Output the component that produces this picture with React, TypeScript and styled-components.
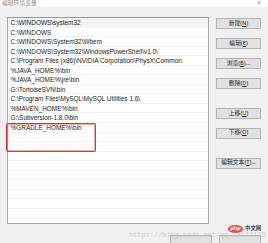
import React from "react";
import styled, { createGlobalStyle } from "styled-components";

const Global = createGlobalStyle`
  html, body { margin: 0; padding: 0; background: #f0f0f0; overflow: hidden; }
  #root { width: 268px; height: 243px; }
`;

const Window = styled.div`
  position: relative;
  width: 268px;
  height: 243px;
  background: #f0f0f0;
  font-family: "Noto Sans", "Noto Sans CJK SC", sans-serif;
  color: #1e1e1e;
  display: flex;
  flex-direction: column;
  overflow: hidden;
`;

const TitleBar = styled.div`
  height: 12px;
  background: #ffffff;
  display: flex;
  align-items: center;
  justify-content: space-between;
  padding: 0 6px 0 2px;
  box-sizing: border-box;
`;

const Title = styled.span`
  font-size: 5.8px;
  color: #8a8a8a;
  line-height: 1;
`;

const Close = styled.span`
  font-family: "DejaVu Sans", sans-serif;
  font-size: 7px;
  color: #b0b0b0;
  line-height: 1;
`;

const Body = styled.div`
  display: flex;
  gap: 7px;
  padding: 10px 0 0 7px;
`;

const List = styled.div`
  width: 202px;
  height: 207px;
  box-sizing: border-box;
  background: #ffffff;
  border: 1px solid #a8a8a8;
  border-top-color: #9a9a9a;
  display: flex;
  flex-direction: column;
  overflow: hidden;
`;

const Row = styled.div<{ $selected?: boolean }>`
  height: 9.55px;
  flex: none;
  box-sizing: border-box;
  border-bottom: 1px solid #f2f2f2;
  background: ${(p) => (p.$selected ? "#f3f3f3" : "transparent")};
  padding-left: 2.5px;
  font-family: "Liberation Sans", Arial, sans-serif;
  font-size: 6.45px;
  line-height: 9px;
  color: #1a1a1a;
  white-space: nowrap;
`;

const ButtonCol = styled.div`
  width: 45px;
  display: flex;
  flex-direction: column;
  gap: 8.4px;
  padding-top: 0.7px;
`;

const Spacer = styled.div<{ $h: number }>`
  height: ${(p) => p.$h}px;
  flex: none;
`;

const Btn = styled.div`
  height: 11.6px;
  box-sizing: border-box;
  background: #e1e1e1;
  border: 1px solid #b4b4b4;
  display: flex;
  align-items: center;
  justify-content: center;
  font-size: 5.8px;
  color: #222;
  white-space: nowrap;
  line-height: 1;
  & u { text-decoration-thickness: 0.5px; text-underline-offset: 1px; }
`;

const BottomBar = styled.div`
  display: flex;
  justify-content: flex-end;
  gap: 7px;
  padding: 11px 7px 0 0;
`;

const BottomBtn = styled.div`
  width: 42px;
  height: 12px;
  box-sizing: border-box;
  background: #e1e1e1;
  border: 1px solid #b4b4b4;
`;

const RedBox = styled.div`
  position: absolute;
  left: 6px;
  top: 123px;
  width: 90px;
  height: 29px;
  box-sizing: border-box;
  border: 1px solid #ec2b2b;
  box-shadow: inset 0 0 0 0.6px rgba(236, 43, 43, 0.7);
  border-radius: 1.5px;
`;

const Watermark = styled.div`
  position: absolute;
  left: 129px;
  top: 231px;
  font-family: "Liberation Mono", monospace;
  font-size: 6.9px;
  line-height: 8px;
  color: rgba(190, 190, 190, 0.85);
  white-space: nowrap;
`;

const PhpMark = styled.div`
  position: absolute;
  left: 228px;
  top: 225px;
  display: flex;
  align-items: center;
  gap: 2px;
`;

const PhpOval = styled.span`
  width: 15px;
  height: 7.5px;
  border-radius: 50%;
  background: #e5504f;
  color: #fff;
  font-family: "Liberation Sans", sans-serif;
  font-style: italic;
  font-weight: bold;
  font-size: 5.5px;
  display: flex;
  align-items: center;
  justify-content: center;
  line-height: 1;
`;

const PhpText = styled.span`
  font-size: 5.4px;
  color: #444;
  font-weight: bold;
  line-height: 1;
`;

const paths = [
  "C:\\WINDOWS\\system32",
  "C:\\WINDOWS",
  "C:\\WINDOWS\\System32\\Wbem",
  "C:\\WINDOWS\\System32\\WindowsPowerShell\\v1.0\\",
  "C:\\Program Files (x86)\\NVIDIA Corporation\\PhysX\\Common",
  "%JAVA_HOME%\\bin",
  "%JAVA_HOME%\\jre\\bin",
  "G:\\TortoiseSVN\\bin",
  "C:\\Program Files\\MySQL\\MySQL Utilities 1.6\\",
  "%MAVEN_HOME%\\bin",
  "G:\\Subversion-1.8.0\\bin",
  "%GRADLE_HOME%\\bin",
];

const rows = [...paths, ...Array(10).fill("")];

type B = { label: string; key: string; suffix?: string; before?: number };
const buttons: B[] = [
  { label: "新建", key: "N" },
  { label: "编辑", key: "E" },
  { label: "浏览", key: "B", suffix: "..." },
  { label: "删除", key: "D" },
  { label: "上移", key: "U", before: 10 },
  { label: "下移", key: "O" },
  { label: "编辑文本", key: "T", suffix: "...", before: 10 },
];

export default function App() {
  return (
    <>
      <Global />
      <Window>
        <TitleBar>
          <Title>编辑环境变量</Title>
          <Close>✕</Close>
        </TitleBar>
        <Body>
          <List>
            {rows.map((r, i) => (
              <Row key={i} $selected={i === 0}>
                {r}
              </Row>
            ))}
          </List>
          <ButtonCol>
            {buttons.map((b) => (
              <React.Fragment key={b.key}>
                {b.before ? <Spacer $h={b.before - 8.4} /> : null}
                <Btn>
                  {b.label}(<u>{b.key}</u>){b.suffix ?? ""}
                </Btn>
              </React.Fragment>
            ))}
          </ButtonCol>
        </Body>
        <BottomBar>
          <BottomBtn />
          <BottomBtn />
        </BottomBar>
        <RedBox />
        <Watermark>https://blog.csdn.net/qq_22172133</Watermark>
        <PhpMark>
          <PhpOval>php</PhpOval>
          <PhpText>中文网</PhpText>
        </PhpMark>
      </Window>
    </>
  );
}
